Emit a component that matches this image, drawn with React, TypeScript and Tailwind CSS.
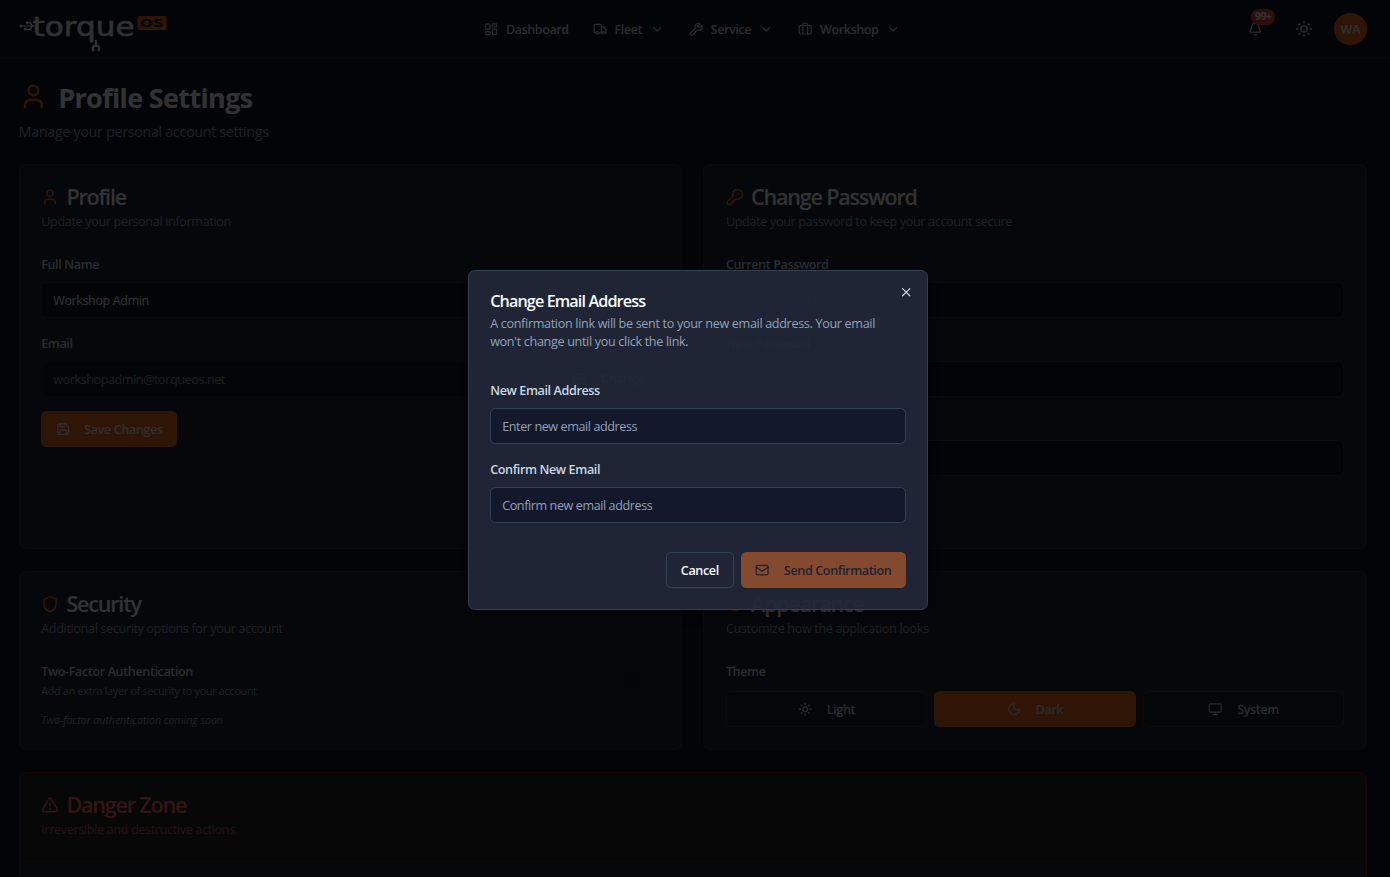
import React from 'react'
import {
  Bell,
  Briefcase,
  ChevronDown,
  KeyRound,
  LayoutDashboard,
  Mail,
  Monitor,
  Moon,
  Save,
  Shield,
  Sun,
  TriangleAlert,
  Truck,
  User,
  Wrench,
  X,
  type LucideIcon,
} from 'lucide-react'
import clsx from 'clsx'

// the whole ui runs on a slightly smaller rem
document.documentElement.classList.add('text-[14.4px]')

const Logo: React.FC = () => (
  <svg width="150" height="44" viewBox="0 0 150 44" className="mt-px shrink-0">
    <g stroke="#f1f5f9" strokeWidth="1.2" fill="none">
      <path d="M2 18h14M8 14.800h3.500l2 3M6 21.300h5l2-3" />
    </g>
    <g fill="#f1f5f9">
      <circle cx="2" cy="18" r="1.600" />
      <circle cx="8" cy="14.800" r="1.400" />
      <circle cx="6" cy="21.300" r="1.400" />
    </g>
    <text
      x="13.500"
      y="28"
      textLength="102"
      lengthAdjust="spacingAndGlyphs"
      fontFamily="DejaVu Sans"
      fontSize="26"
      fill="#f1f5f9"
      stroke="#f1f5f9"
      strokeWidth="0.500"
    >
      torque
    </text>
    <path
      d="M77 32v5M74.800 43.200c-2-2.700-1-5.700 2.200-5.700s4.200 3 2.200 5.700"
      stroke="#f1f5f9"
      strokeWidth="2.400"
      fill="none"
    />
    <rect x="118.500" y="8" width="29" height="14" rx="2" fill="#ea6a20" />
    <text
      x="121"
      y="19"
      textLength="24"
      lengthAdjust="spacingAndGlyphs"
      fontFamily="DejaVu Sans"
      fontWeight="bold"
      fontSize="11"
      fill="#0f172a"
    >
      OS
    </text>
  </svg>
)

const navItems: {
  label: string
  icon: LucideIcon
  width: string
  menu: boolean
}[] = [
  {
    label: 'Dashboard',
    icon: LayoutDashboard,
    width: 'w-[62.400px]',
    menu: false,
  },
  { label: 'Fleet', icon: Truck, width: 'w-[28.500px]', menu: true },
  { label: 'Service', icon: Wrench, width: 'w-[41.500px]', menu: true },
  { label: 'Workshop', icon: Briefcase, width: 'w-[59.200px]', menu: true },
]

const Header: React.FC = () => (
  <header className="relative flex h-[59px] items-center justify-between border-b border-slate-800 pr-[23.400px] pl-[18.500px]">
    <Logo />
    <nav className="absolute left-[484.400px] flex items-center gap-[24.600px] text-sm font-semibold text-slate-300 tracking-[-0.036em]">
      {navItems.map(({ label, icon: Icon, width, menu }) => (
        <div key={label} className="flex items-center gap-2">
          <Icon className="size-4" />
          <span className={clsx(width, 'pt-0.5 whitespace-nowrap')}>
            {label}
          </span>
          {menu && <ChevronDown className="size-4" />}
        </div>
      ))}
    </nav>
    <div className="flex items-center text-slate-300">
      <div className="relative mr-[32.500px]">
        <Bell className="size-4" />
        <span className="absolute -top-[13px] left-[3px] flex h-[16px] w-[24px] items-center justify-center rounded-full bg-[#ef4444] text-[10.500px] font-bold text-slate-100 tracking-[-0.05em]">
          99+
        </span>
      </div>
      <Sun className="mr-[21px] size-5" />
      <div className="flex size-9 items-center justify-center rounded-full bg-[#ea6a20] pt-px text-sm font-semibold text-slate-200 tracking-[-0.02em]">
        WA
      </div>
    </div>
  </header>
)

type CardProps = {
  title: string
  description: string
  icon: LucideIcon
  children?: React.ReactNode
}

const CardHeader: React.FC<CardProps & { danger?: boolean }> = ({
  title,
  description,
  icon: Icon,
  danger,
}) => (
  <div
    className={clsx(
      'space-y-1.5 p-6',
      danger && 'border-b border-red-500/10 bg-[#29272b] text-[#f87171]'
    )}
  >
    <h3 className="flex items-center gap-2 text-2xl leading-none font-semibold tracking-[-0.056em]">
      <Icon className={clsx('size-5', !danger && 'text-[#ea6a20]')} />
      {title}
    </h3>
    <p
      className={clsx(
        'text-sm tracking-[-0.027em]',
        danger ? 'text-[#c5505a]' : 'text-slate-400'
      )}
    >
      {description}
    </p>
  </div>
)

const Card: React.FC<CardProps> = ({ children, ...header }) => (
  <section className="rounded-lg border border-slate-700/50 bg-[#1f2733]">
    <CardHeader {...header} />
    <div className="px-6 pb-6">{children}</div>
  </section>
)

const Label: React.FC<{ children: React.ReactNode }> = ({ children }) => (
  <label className="block h-6 pt-px text-sm leading-6 font-semibold text-slate-300 tracking-[-0.031em]">
    {children}
  </label>
)

const Field: React.FC<{
  label: string
  value?: string
  placeholder?: string
  disabled?: boolean
  dialog?: boolean
}> = ({ label, value, placeholder, disabled, dialog }) => (
  <div className="min-w-0 flex-1 space-y-2">
    <Label>{label}</Label>
    <input
      className={clsx(
        'block h-10 w-full rounded-md border px-[11px] pt-px text-sm outline-none tracking-[-0.033em]',
        dialog
          ? 'border-[#334155] bg-[#13182a] placeholder:text-slate-400'
          : 'border-slate-700/70 bg-[#0f1525] placeholder:text-slate-500',
        disabled && 'opacity-50'
      )}
      defaultValue={value}
      placeholder={placeholder}
      disabled={disabled}
    />
  </div>
)

const buttonClass =
  'flex h-10 items-center justify-center rounded-md px-4 text-sm font-semibold whitespace-nowrap tracking-[-0.03em]'

const themes = [
  { label: 'Light', icon: Sun },
  { label: 'Dark', icon: Moon },
  { label: 'System', icon: Monitor },
]

const EmailDialog: React.FC = () => (
  <div className="absolute top-[270.100px] left-[467.600px] w-[460.800px] rounded-lg border border-[#334155] bg-[#212838]/93 p-6 shadow-lg">
    <button className="absolute top-4 right-4 text-slate-300">
      <X className="size-4" />
    </button>
    <h2 className="text-lg leading-none font-semibold text-slate-50 tracking-[-0.055em]">
      Change Email Address
    </h2>
    <p className="mt-[6.200px] text-sm leading-[18px] text-slate-400 tracking-[-0.026em]">
      A confirmation link will be sent to your new email address. Your email
      <br />
      won't change until you click the link.
    </p>
    <div className="mt-[13.600px] space-y-4 py-4">
      <Field
        label="New Email Address"
        placeholder="Enter new email address"
        dialog
      />
      <Field
        label="Confirm New Email"
        placeholder="Confirm new email address"
        dialog
      />
    </div>
    <div className="mt-4 flex justify-end gap-2">
      <button
        className={clsx(
          buttonClass,
          'w-[67.500px] border border-[#334155] text-slate-50'
        )}
      >
        <span className="pt-0.5">Cancel</span>
      </button>
      <button
        className={clsx(
          buttonClass,
          'w-[165px] gap-4 bg-[#844a30] text-[#1e2230]'
        )}
      >
        <Mail className="size-4" />
        <span className="pt-0.5">Send Confirmation</span>
      </button>
    </div>
  </div>
)

const App: React.FC = () => (
  <div className="relative h-screen overflow-hidden bg-[#0f1525] font-['Open_Sans',sans-serif] text-slate-50">
    <Header />
    <main className="space-y-6 pt-6 pr-[23px] pl-[18.600px]">
      <div>
        <h1 className="flex h-9 items-center gap-3 text-3xl font-bold tracking-[-0.024em]">
          <User className="size-8 text-[#ea6a20]" />
          <span className="pt-0.5">Profile Settings</span>
        </h1>
        <p className="mt-2 pt-px text-base leading-[21px] text-slate-400 tracking-[-0.025em]">
          Manage your personal account settings
        </p>
      </div>

      <div className="grid grid-cols-2 gap-x-[21px] gap-y-6">
        <Card
          title="Profile"
          description="Update your personal information"
          icon={User}
        >
          <div className="space-y-4">
            <Field label="Full Name" value="Workshop Admin" />
            <div className="flex items-end gap-2">
              <Field label="Email" value="workshopadmin@torqueos.net" disabled />
              <button
                className={clsx(
                  buttonClass,
                  'gap-4 border border-slate-700/50'
                )}
              >
                <Mail className="size-4" />
                Change
              </button>
            </div>
            <button
              className={clsx(
                buttonClass,
                'w-[136px] gap-4 bg-[#ea6a20] text-slate-200'
              )}
            >
              <Save className="size-4" />
              <span className="pt-0.5">Save Changes</span>
            </button>
          </div>
        </Card>

        <Card
          title="Change Password"
          description="Update your password to keep your account secure"
          icon={KeyRound}
        >
          <div className="space-y-4">
            <Field
              label="Current Password"
              placeholder="Enter current password"
            />
            <Field label="New Password" placeholder="Enter new password" />
            <Field
              label="Confirm New Password"
              placeholder="Confirm new password"
            />
            <div className="h-10" />
          </div>
        </Card>

        <Card
          title="Security"
          description="Additional security options for your account"
          icon={Shield}
        >
          <div className="flex items-center justify-between">
            <div>
              <Label>Two-Factor Authentication</Label>
              <p className="mt-0.5 pt-px text-xs text-slate-400 tracking-[-0.025em]">
                Add an extra layer of security to your account
              </p>
            </div>
            <div className="flex h-6 w-11 items-center rounded-full bg-[#1c2026] p-0.5">
              <span className="size-5 rounded-full bg-[#171c26]" />
            </div>
          </div>
          <p className="mt-4 text-xs text-slate-400 italic tracking-[-0.012em]">
            Two-factor authentication coming soon
          </p>
        </Card>

        <Card
          title="Appearance"
          description="Customize how the application looks"
          icon={Moon}
        >
          <Label>Theme</Label>
          <div className="mt-2.5 grid grid-cols-3 gap-2 pt-px">
            {themes.map(({ label, icon: Icon }) => (
              <button
                key={label}
                className={clsx(
                  buttonClass,
                  'gap-4 text-slate-300',
                  label === 'Dark'
                    ? 'bg-[#ea6a20]'
                    : 'border border-slate-700/70 bg-[#1b222e]'
                )}
              >
                <Icon className="size-4" />
                <span className="pt-0.5">{label}</span>
              </button>
            ))}
          </div>
        </Card>
      </div>

      <section className="h-60 overflow-hidden rounded-lg border border-[#7f1d1d] bg-[#1f2733]">
        <CardHeader
          title="Danger Zone"
          description="Irreversible and destructive actions"
          icon={TriangleAlert}
          danger
        />
      </section>
    </main>

    <div className="absolute inset-0 bg-black/80" />
    <EmailDialog />
  </div>
)

export default App
